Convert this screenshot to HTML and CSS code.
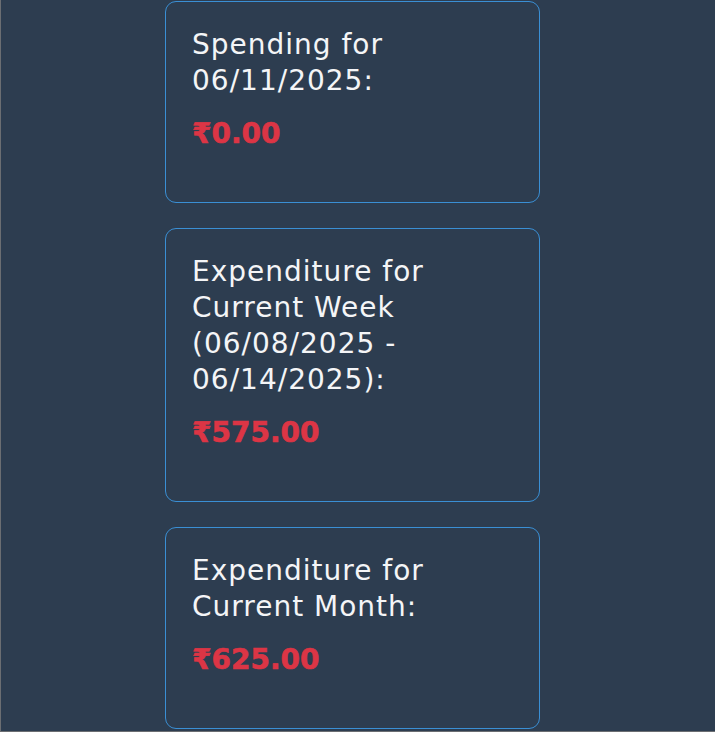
FILE: index.html
```html
<!DOCTYPE html>
<html lang="en">
<head>
<meta charset="utf-8">
<title>Expenditure Summary</title>
<link rel="stylesheet" href="styles.css">
</head>
<body>
<div class="frame">
  <div class="column">
    <div class="card">
      <p class="card-title">Spending for 06/11/2025:</p>
      <p class="card-amount">₹0.00</p>
    </div>
    <div class="card">
      <p class="card-title">Expenditure for Current Week (06/08/2025 - 06/14/2025):</p>
      <p class="card-amount">₹575.00</p>
    </div>
    <div class="card">
      <p class="card-title">Expenditure for Current Month:</p>
      <p class="card-amount">₹625.00</p>
    </div>
  </div>
</div>
</body>
</html>
```
FILE: styles.css
```css
html, body {
  margin: 0;
  padding: 0;
  background: #2d3d50;
}

.frame {
  box-sizing: border-box;
  width: 715px;
  height: 732px;
  overflow: hidden;
  background: #2d3d50;
  border-left: 1px solid #6b6e72;
  border-bottom: 1px solid #6b6e72;
}

.column {
  display: flex;
  flex-direction: column;
  gap: 25px;
  padding: 1px 0 0 164px;
}

.card {
  box-sizing: border-box;
  width: 375px;
  padding: 25px 25px 25px 26px;
  border: 1px solid #3a8fd4;
  border-radius: 11px;
  background: #2d3d50;
  font-family: "DejaVu Sans", "Liberation Sans", sans-serif;
}

.card-title {
  margin: 0;
  font-size: 28px;
  line-height: 36px;
  letter-spacing: 1px;
  color: #f4f5f7;
  font-weight: normal;
}

.card-amount {
  margin: 18px 0 26px;
  font-size: 28px;
  line-height: 34px;
  font-weight: bold;
  color: #dc3545;
  -webkit-text-stroke: 0.6px #dc3545;
}
```
